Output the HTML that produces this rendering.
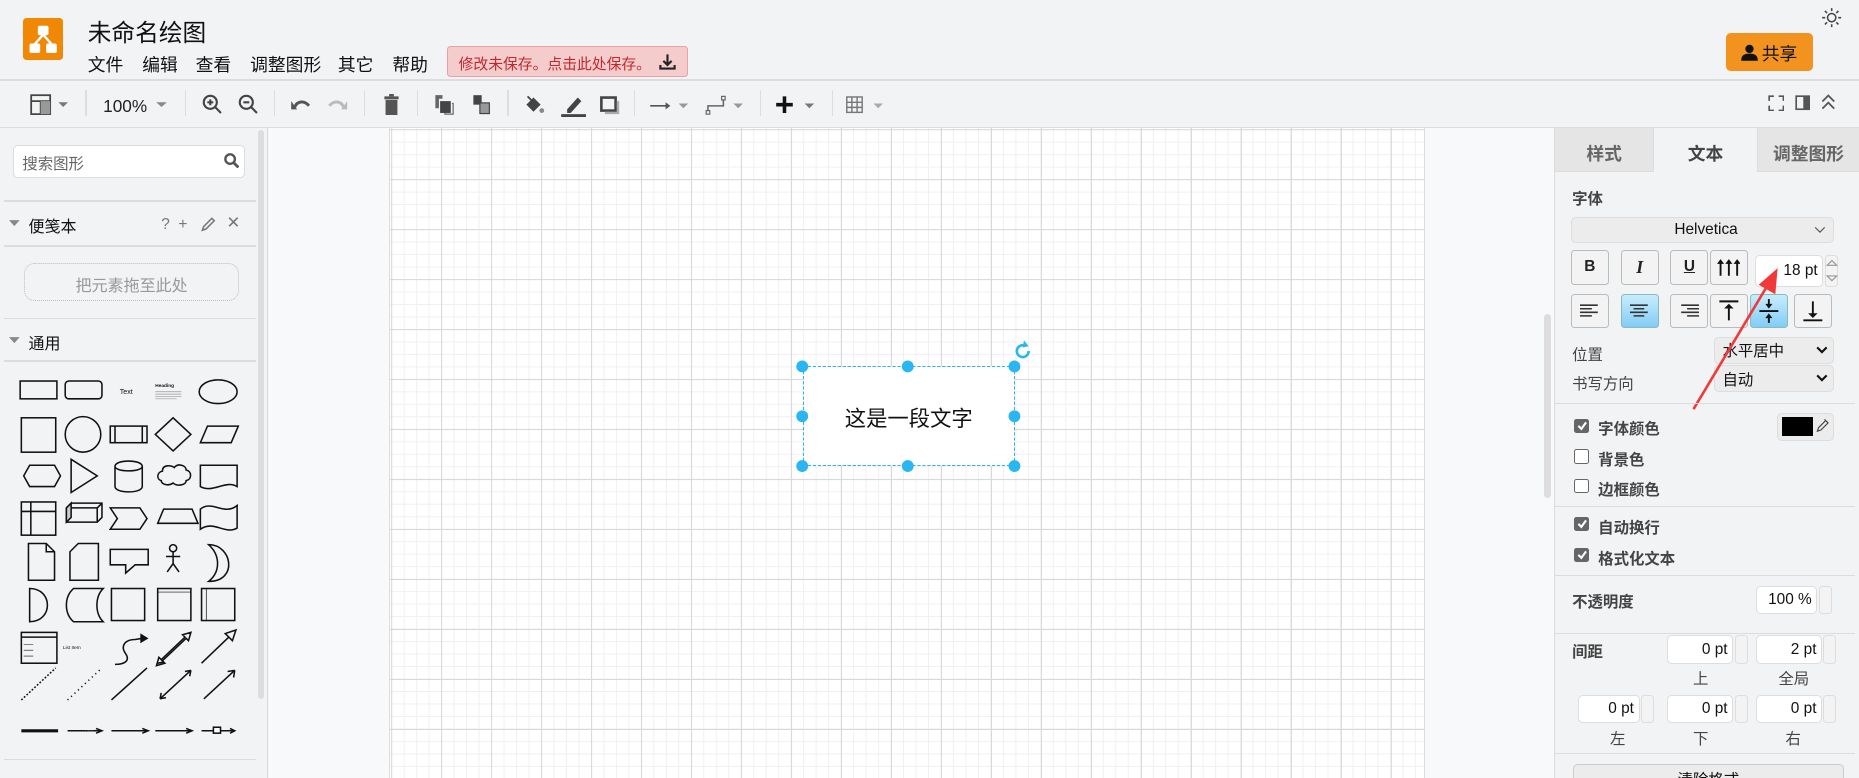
<!DOCTYPE html>
<html><head><meta charset="utf-8">
<style>
*{box-sizing:border-box;margin:0;padding:0}
html,body{width:1859px;height:778px;overflow:hidden;background:#f1f3f4}
#w{zoom:1.18559;width:1568px;height:656px;position:relative;overflow:hidden;font-family:"Liberation Sans","Noto Sans CJK SC",sans-serif;color:#222;background:#f1f3f4}
.a{position:absolute}
.t{font-size:13px;color:#444;white-space:nowrap}
.b{font-weight:bold}
.btn{position:absolute;border:1px solid #bbb;border-radius:3px;background:#f3f3f3;display:flex;align-items:center;justify-content:center}
.inp{position:absolute;background:#fff;border:1px solid #ddd;border-radius:4px;font-size:13px;text-align:right;padding-right:4px;display:flex;align-items:center;justify-content:flex-end;color:#111}
.spin{position:absolute;width:11px;border:1px solid #ddd;border-radius:3px;background:#f3f3f3}
.sel{position:absolute;border:1px solid #ddd;border-radius:4px;background:#ececec;font-size:13px;display:flex;align-items:center;padding-left:6px;color:#111}
.hr{position:absolute;height:1px;background:#dadce0}
.cb{position:absolute;width:12px;height:12px;border:1px solid #666;border-radius:2px;background:#fff}
.cb.on{background:#666}
.tb{position:absolute;top:79px}
.sep{position:absolute;top:76px;width:1px;height:22px;background:#ddd}
.m{position:absolute;top:43px;font-size:15px;color:#111;white-space:nowrap}
</style></head><body><div id="w">
<!-- header -->
<div class="a" style="left:19px;top:15px;width:34px;height:36px;background:#f08705;border-radius:3px"></div>
<svg class="a" style="left:19px;top:15px" width="34" height="36"><g fill="#fff" stroke="#fff"><rect x="13" y="7" width="8" height="7" rx="1"/><rect x="6" y="22" width="8" height="7" rx="1"/><rect x="20" y="22" width="8" height="7" rx="1"/><path d="M17 14L10 22M17 14L24 22" stroke-width="2" fill="none"/></g></svg>
<div class="a" style="left:74px;top:11px;font-size:20px;color:#111">未命名绘图</div>
<div class="m" style="left:74px">文件</div><div class="m" style="left:120px">编辑</div><div class="m" style="left:165px">查看</div><div class="m" style="left:211px">调整图形</div><div class="m" style="left:285px">其它</div><div class="m" style="left:331px">帮助</div>
<div class="a" style="left:377px;top:39px;width:203px;height:26px;background:#f4cccc;border:1px solid #e6a2a8;border-radius:3px;font-size:12.5px;color:#c0282d;padding:5px 0 0 9px">修改未保存。点击此处保存。</div>
<svg class="a" style="left:555px;top:44px" width="16" height="16"><path d="M8 2v9M4.5 7.5L8 11l3.5-3.5M2 11v3h12v-3" stroke="#222" stroke-width="1.8" fill="none"/></svg>
<div class="a" style="left:1456px;top:28px;width:73px;height:32px;background:#f2931f;border-radius:4px;font-size:15px;color:#111;padding:6px 0 0 30px">共享</div>
<svg class="a" style="left:1468px;top:36px" width="16" height="16"><circle cx="8" cy="5" r="3.5" fill="#111"/><path d="M1 15c0-5 3-6 7-6s7 1 7 6z" fill="#111"/></svg>
<svg class="a" style="left:1536px;top:6px" width="18" height="18"><circle cx="9" cy="9" r="3.5" stroke="#444" stroke-width="1.3" fill="none"/><g stroke="#444" stroke-width="1.3"><path d="M9 1v2.5M9 14.5V17M1 9h2.5M14.5 9H17M3.3 3.3l1.8 1.8M12.9 12.9l1.8 1.8M3.3 14.7l1.8-1.8M12.9 5.1l1.8-1.8"/></g></svg>
<div class="hr" style="left:0;top:67px;width:1568px;background:#dcdcdc"></div>
<!-- toolbar -->
<svg class="tb" style="left:25px" width="36" height="18"><rect x="1" y="1" width="16" height="16" fill="none" stroke="#444" stroke-width="1.5"/><path d="M1 6h16M9 6v11" stroke="#444" stroke-width="1.5"/><rect x="9" y="6" width="8" height="11" fill="#999"/><path d="M24 7h8l-4 4z" fill="#777"/></svg>
<div class="sep" style="left:72px"></div>
<div class="a" style="left:87px;top:81px;font-size:14.5px;color:#222">100%</div>
<svg class="tb" style="left:131px" width="12" height="18"><path d="M1 7h9l-4.5 4z" fill="#888"/></svg>
<div class="sep" style="left:156px"></div>
<svg class="tb" style="left:170px" width="18" height="18"><circle cx="7" cy="7" r="5.5" stroke="#444" stroke-width="1.8" fill="none"/><path d="M11 11l5 5M4.5 7h5M7 4.5v5" stroke="#444" stroke-width="1.8"/></svg>
<svg class="tb" style="left:201px" width="18" height="18"><circle cx="7" cy="7" r="5.5" stroke="#444" stroke-width="1.8" fill="none"/><path d="M11 11l5 5M4.5 7h5" stroke="#444" stroke-width="1.8"/></svg>
<div class="sep" style="left:231px"></div>
<svg class="tb" style="left:245px" width="18" height="18"><path d="M4 11c2-5 8-6 12-1" stroke="#555" stroke-width="2.5" fill="none"/><path d="M1 6l5 7H1z" fill="#555"/></svg>
<svg class="tb" style="left:276px" width="18" height="18"><path d="M14 11c-2-5-8-6-12-1" stroke="#bbb" stroke-width="2.5" fill="none"/><path d="M17 6l-5 7h5z" fill="#bbb"/></svg>
<div class="sep" style="left:307px"></div>
<svg class="tb" style="left:322px" width="16" height="18"><rect x="2" y="2" width="12" height="2.5" fill="#555"/><rect x="6" y="0" width="4" height="2" fill="#555"/><rect x="3" y="5" width="10" height="13" fill="#555"/></svg>
<div class="sep" style="left:352px"></div>
<svg class="tb" style="left:365px" width="18" height="18"><path d="M2 1h6v3H5v8H2z" fill="#666"/><rect x="6" y="6" width="9" height="10" fill="#444"/><path d="M10 16v1h7V8h-1" stroke="#666" fill="none"/></svg>
<svg class="tb" style="left:397px" width="18" height="18"><rect x="2" y="1" width="7" height="8" fill="#444"/><rect x="7" y="7" width="9" height="10" fill="#444"/><rect x="8" y="8" width="7" height="8" fill="#999"/></svg>
<div class="sep" style="left:428px"></div>
<svg class="tb" style="left:442px" width="18" height="18"><path d="M2 9l6-6 6 6-6 6z" fill="#444"/><path d="M3 2l5 5" stroke="#444" stroke-width="1.5"/><circle cx="15" cy="14" r="2" fill="#888"/></svg>
<svg class="tb" style="left:472px" width="22" height="20"><path d="M6 13l9-10 3 3-9 10H6z" fill="#444"/><rect x="1" y="17" width="21" height="3" fill="#444"/></svg>
<svg class="tb" style="left:505px" width="18" height="18"><rect x="2" y="3" width="12" height="11" fill="none" stroke="#444" stroke-width="2.2"/><path d="M5 16h11V6" stroke="#aaa" stroke-width="2" fill="none"/></svg>
<div class="sep" style="left:535px"></div>
<svg class="tb" style="left:547px" width="36" height="18"><path d="M1 10h14" stroke="#555" stroke-width="1.4"/><path d="M14 7l4 3-4 3z" fill="#555"/><path d="M25 8h8l-4 4z" fill="#999"/></svg>
<svg class="tb" style="left:595px" width="36" height="20"><rect x="1" y="14" width="3" height="3" fill="none" stroke="#666"/><rect x="14" y="2" width="3" height="3" fill="none" stroke="#666"/><path d="M2.5 14V10h13V5" stroke="#666" stroke-width="1.3" fill="none"/><path d="M24 8h8l-4 4z" fill="#999"/></svg>
<div class="sep" style="left:641px"></div>
<svg class="tb" style="left:654px" width="36" height="18"><path d="M8 2v14M1 9h14" stroke="#111" stroke-width="3"/><path d="M25 8h8l-4 4z" fill="#777"/></svg>
<div class="sep" style="left:702px"></div>
<svg class="tb" style="left:713px" width="36" height="18"><g stroke="#777" stroke-width="1.2" fill="none"><rect x="1.5" y="2.5" width="13" height="13"/><path d="M1.5 7h13M1.5 11.3h13M5.8 2.5v13M10.2 2.5v13"/></g><path d="M24 8h8l-4 4z" fill="#aaa"/></svg>
<svg class="tb" style="left:1491px;top:80px" width="14" height="14"><path d="M1 5V1h4M9 1h4v4M13 9v4H9M5 13H1V9" stroke="#555" stroke-width="1.4" fill="none"/></svg>
<svg class="tb" style="left:1514px;top:80px" width="13" height="14"><rect x="1" y="1" width="11" height="11" stroke="#555" stroke-width="1.4" fill="none"/><rect x="7" y="1" width="5" height="11" fill="#555"/></svg>
<svg class="tb" style="left:1535px;top:78px" width="14" height="16"><path d="M2 8l5-5 5 5M2 14l5-5 5 5" stroke="#555" stroke-width="1.5" fill="none"/></svg>
<div class="hr" style="left:0;top:107px;width:1568px;background:#dcdcdc"></div>
<!-- left sidebar -->
<div class="a" style="left:0;top:108px;width:226px;height:548px;background:#f1f3f4;border-right:1px solid #dcdcdc"></div>
<div class="a" style="left:218px;top:110px;width:5px;height:480px;background:#ddd;border-radius:3px"></div>
<div class="a" style="left:11px;top:122px;width:196px;height:28px;background:#fff;border:1px solid #ddd;border-radius:4px;font-size:13px;color:#666;padding:5px 0 0 7px">搜索图形</div>
<svg class="a" style="left:188px;top:128px" width="14" height="14"><circle cx="6" cy="6" r="4" stroke="#555" stroke-width="2" fill="none"/><path d="M9 9l4 4" stroke="#555" stroke-width="2.4"/></svg>
<div class="hr" style="left:3px;top:169px;width:213px"></div>
<svg class="a" style="left:8px;top:185px" width="10" height="8"><path d="M0 1h9L4.5 6z" fill="#888"/></svg>
<div class="a" style="left:24px;top:180px;font-size:13.5px;color:#111">便笺本</div>
<div class="a t" style="left:136px;top:182px;color:#777">?&nbsp;&nbsp;+</div>
<svg class="a" style="left:169px;top:182px" width="14" height="14"><path d="M2 12l1-3 7-7 2 2-7 7z" stroke="#777" stroke-width="1.3" fill="none"/></svg>
<div class="a" style="left:191px;top:180px;font-size:14px;color:#777">✕</div>
<div class="hr" style="left:3px;top:207px;width:213px"></div>
<div class="a" style="left:20px;top:222px;width:182px;height:32px;border:1.5px dotted #bbb;border-radius:9px;font-size:13.5px;color:#999;text-align:center;padding-top:7px">把元素拖至此处</div>
<div class="hr" style="left:3px;top:268px;width:213px"></div>
<svg class="a" style="left:8px;top:283px" width="10" height="8"><path d="M0 1h9L4.5 6z" fill="#888"/></svg>
<div class="a" style="left:24px;top:278px;font-size:13.5px;color:#111">通用</div>
<div class="hr" style="left:3px;top:304px;width:213px"></div>
<svg class="a" style="left:0;top:310px" width="216" height="320" fill="none" stroke="#111" stroke-width="1.3">
<g transform="translate(0,-310)">
<rect x="17" y="321" width="31" height="15"/><rect x="55" y="321" width="31" height="15" rx="3"/>
<text x="101" y="332" font-size="6" fill="#111" stroke="none" font-family="Liberation Sans">Text</text>
<text x="131" y="326" font-size="4" fill="#111" stroke="none" font-weight="bold" font-family="Liberation Sans">Heading</text>
<path d="M131 330h22M131 332h22M131 334h22M131 336h18" stroke="#999" stroke-width=".6"/>
<ellipse cx="184" cy="330" rx="16" ry="10"/>
<rect x="18" y="352" width="29" height="29"/><circle cx="70" cy="366" r="15"/>
<rect x="93" y="359" width="31" height="14"/><path d="M97 359v14M120 359v14"/>
<path d="M146 352l15 14-15 14-15-14z"/><path d="M175 359h26l-6 14h-26z"/>
<path d="M20 401l5-9h21l5 9-5 9H25z"/><path d="M60 387l22 14-22 14z"/>
<path d="M97 393c0-6 23-6 23 0v17c0 6-23 6-23 0z M97 393c0 5 23 5 23 0"/>
<path d="M137 397c0-6 8-5 10-3 3-4 10-2 10 2 5 1 5 8 0 9 0 4-8 5-11 2-4 3-10 1-10-2-4-1-4-7 1-8z"/>
<path d="M169 392h31v18c-10-6-20 6-31 0z"/>
<rect x="18" y="423" width="29" height="28"/><path d="M18 431h29M26 423v28"/>
<path d="M56 428l4-4h26v12l-4 4H56z M56 428h26v12M82 428l4-4"/><path d="M56 428l4-4v12l-4 4z" fill="#ccc"/>
<path d="M93 428h25l6 9-6 9H93l6-9z"/><path d="M138 429h24l5 12h-34z"/>
<path d="M169 429c10-8 20 6 31-3v19c-10 6-20-7-31 1z"/>
<path d="M24 458h15l7 7v24H24z M39 458v7h7"/><path d="M66 458h17v31H59V465z"/>
<path d="M93 463h32v13h-11l-8 7v-7H93z"/><circle cx="146" cy="462" r="3"/><path d="M146 465v10M140 469h12M146 475l-5 7M146 475l5 7"/>
<path d="M176 459c20 0 25 31 0 31 10-8 10-22 0-31z"/>
<path d="M25 496c20 0 20 28 0 28z"/><path d="M62 496h25c-7 7-7 21 0 28H62c-8-7-8-21 0-28z"/>
<rect x="94" y="496" width="28" height="27"/><rect x="133" y="496" width="28" height="27"/><path d="M133 499h28" stroke-width=".6"/>
<rect x="170" y="496" width="28" height="27"/><path d="M174 496v27" stroke-width=".6"/>
<rect x="18" y="533" width="30" height="26"/><path d="M18 537h30"/>
<path d="M20 543h8M20 548h8M20 553h8" stroke-width=".5"/>
<text x="53" y="547" font-size="4" fill="#111" stroke="none" font-family="Liberation Sans">List Item</text>
<path d="M97 560c8 0 13-3 9-9-5-7 0-12 8-12l6-1"/><path d="M119 535l5 3-5 3z" fill="#111"/>
<path d="M133 559l5-1-2-2 20-19-2-2 7-2-2 7-2-2-20 19 2 2-7 2 2-7 2 2"/>
<path d="M170 559l23-22-3-3 9-3-3 9-3-3-23 22z"/>
<path d="M18 590l29-27" stroke-dasharray="1.5,1.5"/><path d="M57 590l29-27" stroke-dasharray="1,3"/>
<path d="M94 590l30-27"/><path d="M135 589l26-24"/><path d="M135 589l5-1M135 589l1-5M161 565l-5 1M161 565l-1 5"/>
<path d="M172 589l26-24"/><path d="M198 565l-6 1M198 565l-1 6"/>
<path d="M18 616h31" stroke-width="2.6"/>
<path d="M57 616h28M81 614l5 2-5 2M94 616h30M120 614l5 2-5 2M131 616h30M157 614l5 2-5 2M170 616h28M194 614l4 2-4 2"/>
<rect x="180" y="613" width="6" height="5" fill="#fff"/>
<text x="72" y="617" font-size="2.5" fill="#888" stroke="none">Label</text>
</g></svg>
<div class="hr" style="left:3px;top:640px;width:213px"></div>
<!-- canvas -->
<div class="a" style="left:227px;top:108px;width:1084px;height:548px;background:#f8f9fa"></div>
<div class="a" style="left:328px;top:108px;width:874px;height:548px;background-color:#fff;border-left:1px solid #ddd;border-right:1px solid #ddd;
background-image:linear-gradient(#d8d8d8 1px,transparent 1px),linear-gradient(90deg,#d8d8d8 1px,transparent 1px),linear-gradient(#f0f0f0 1px,transparent 1px),linear-gradient(90deg,#f0f0f0 1px,transparent 1px);
background-size:42.17px 42.17px,42.17px 42.17px,10.54px 10.54px,10.54px 10.54px;background-position:1px 1px,1px 1px,1px 1px,1px 1px"></div>
<div class="a" style="left:1302px;top:265px;width:6px;height:155px;background:#ddd;border-radius:3px"></div>
<div class="a" style="left:677px;top:309px;width:179px;height:84px;background:#fff;border:1px dashed #111;outline:1px dashed #29b6f2;outline-offset:-1px"></div>
<div class="a" style="left:677px;top:339px;width:179px;text-align:center;font-size:18px;color:#111">这是一段文字</div>
<svg class="a" style="left:665px;top:285px" width="205" height="120"><g fill="#29b6f2"><circle cx="12" cy="24" r="5"/><circle cx="101" cy="24" r="5"/><circle cx="191" cy="24" r="5"/><circle cx="12" cy="66" r="5"/><circle cx="191" cy="66" r="5"/><circle cx="12" cy="108" r="5"/><circle cx="101" cy="108" r="5"/><circle cx="191" cy="108" r="5"/></g>
<path d="M208 11a5 5 0 1 1-3-4.5" stroke="#29b6f2" stroke-width="2.2" fill="none" transform="translate(-5,0)"/><path d="M199 2l4 5-5 1z" fill="#29b6f2"/></svg>
<!-- right panel -->
<div class="a" style="left:1311px;top:108px;width:257px;height:548px;background:#f1f3f4;border-left:1px solid #dcdcdc"></div>
<div class="a" style="left:1312px;top:108px;width:83px;height:37px;background:#e5e5e5;border-bottom:1px solid #dcdcdc;border-right:1px solid #dcdcdc;font-size:15px;font-weight:bold;color:#666;text-align:center;padding-top:10px">样式</div>
<div class="a" style="left:1395px;top:108px;width:87px;height:37px;font-size:15px;font-weight:bold;color:#444;text-align:center;padding-top:10px">文本</div>
<div class="a" style="left:1482px;top:108px;width:86px;height:37px;background:#e5e5e5;border-bottom:1px solid #dcdcdc;border-left:1px solid #dcdcdc;font-size:15px;font-weight:bold;color:#666;text-align:center;padding-top:10px;white-space:nowrap">调整图形</div>
<div class="a t b" style="left:1326px;top:158px">字体</div>
<div class="sel" style="left:1325px;top:183px;width:222px;height:22px;justify-content:center">Helvetica</div>
<svg class="a" style="left:1530px;top:190px" width="10" height="8"><path d="M1 2l4 4 4-4" stroke="#555" fill="none"/></svg>
<div class="btn" style="left:1325px;top:211px;width:32px;height:29px;font-weight:900;font-size:13px">B</div>
<div class="btn" style="left:1367px;top:211px;width:32px;height:29px;font-style:italic;font-weight:bold;font-family:'Liberation Serif',serif;font-size:15px">I</div>
<div class="btn" style="left:1409px;top:211px;width:32px;height:29px;font-weight:bold;text-decoration:underline;font-size:13px">U</div>
<div class="btn" style="left:1442px;top:211px;width:32px;height:29px"><svg width="20" height="16"><g stroke="#111" stroke-width="1.6"><path d="M3 3v12M10 3v12M17 3v12"/></g><g fill="#111"><path d="M0 5l3-4 3 4zM7 5l3-4 3 4zM14 5l3-4 3 4z"/></g></svg></div>
<div class="inp" style="left:1480px;top:215px;width:58px;height:27px">18 pt</div>
<div class="spin" style="left:1539px;top:215px;height:27px"></div>
<svg class="a" style="left:1540px;top:217px" width="10" height="24"><path d="M1 7l4-4 4 4zM1 16l4 4 4-4z" fill="none" stroke="#999"/></svg>
<div class="btn" style="left:1325px;top:248px;width:32px;height:29px"><svg width="16" height="12"><path d="M0 1h15M0 4h10M0 7h15M0 10h10" stroke="#333" stroke-width="1.3"/></svg></div>
<div class="btn" style="left:1367px;top:248px;width:32px;height:29px;background:linear-gradient(#c8ecfd,#82cdf6);border-color:#8bb"><svg width="16" height="12"><path d="M0 1h15M3 4h9M0 7h15M3 10h9" stroke="#333" stroke-width="1.3"/></svg></div>
<div class="btn" style="left:1409px;top:248px;width:32px;height:29px"><svg width="16" height="12"><path d="M1 1h15M6 4h10M1 7h15M6 10h10" stroke="#333" stroke-width="1.3"/></svg></div>
<div class="btn" style="left:1442px;top:248px;width:32px;height:29px"><svg width="20" height="20"><path d="M2 2h16M10 6v12" stroke="#111" stroke-width="1.6"/><path d="M6 8l4-4 4 4z" fill="#111"/></svg></div>
<div class="btn" style="left:1476px;top:248px;width:32px;height:29px;background:linear-gradient(#c8ecfd,#82cdf6);border-color:#8bb"><svg width="20" height="22"><path d="M2 11h16M10 1v6M10 15v6" stroke="#111" stroke-width="1.6"/><path d="M7 5l3 4 3-4zM7 17l3-4 3 4z" fill="#111"/></svg></div>
<div class="btn" style="left:1513px;top:248px;width:32px;height:29px"><svg width="20" height="20"><path d="M2 18h16M10 2v12" stroke="#111" stroke-width="1.6"/><path d="M6 12l4 4 4-4z" fill="#111"/></svg></div>
<div class="a t" style="left:1326px;top:289px">位置</div>
<div class="sel" style="left:1446px;top:284px;width:101px;height:23px">水平居中</div>
<svg class="a" style="left:1532px;top:291px" width="10" height="8"><path d="M1 2l4 4 4-4" stroke="#111" stroke-width="1.8" fill="none"/></svg>
<div class="a t" style="left:1326px;top:314px">书写方向</div>
<div class="sel" style="left:1446px;top:308px;width:101px;height:23px">自动</div>
<svg class="a" style="left:1532px;top:315px" width="10" height="8"><path d="M1 2l4 4 4-4" stroke="#111" stroke-width="1.8" fill="none"/></svg>
<svg class="a" style="left:1420px;top:220px" width="90" height="130"><path d="M8 125L72 18" stroke="#f03a3a" stroke-width="2.2"/><path d="M79 6l-2 22-14-8z" fill="#f03a3a"/></svg>
<div class="hr" style="left:1312px;top:340px;width:253px"></div>
<div class="cb on" style="left:1328px;top:353px"></div><svg class="a" style="left:1329px;top:354px" width="10" height="10"><path d="M2 5l2.5 2.5L8.5 2" stroke="#fff" stroke-width="1.8" fill="none"/></svg>
<div class="a t b" style="left:1348px;top:352px">字体颜色</div>
<div class="a" style="left:1499px;top:348px;width:48px;height:24px;border:1px solid #ddd;border-radius:4px;background:#ececec"></div>
<div class="a" style="left:1503px;top:352px;width:26px;height:16px;background:#000"></div>
<svg class="a" style="left:1531px;top:352px" width="12" height="14"><path d="M2 12l1-3 6-6 2 2-6 6zM8 2l3 3" stroke="#444" fill="none"/></svg>
<div class="cb" style="left:1328px;top:379px"></div><div class="a t b" style="left:1348px;top:378px">背景色</div>
<div class="cb" style="left:1328px;top:404px"></div><div class="a t b" style="left:1348px;top:403px">边框颜色</div>
<div class="hr" style="left:1312px;top:427px;width:253px"></div>
<div class="cb on" style="left:1328px;top:436px"></div><svg class="a" style="left:1329px;top:437px" width="10" height="10"><path d="M2 5l2.5 2.5L8.5 2" stroke="#fff" stroke-width="1.8" fill="none"/></svg>
<div class="a t b" style="left:1348px;top:435px">自动换行</div>
<div class="cb on" style="left:1328px;top:462px"></div><svg class="a" style="left:1329px;top:463px" width="10" height="10"><path d="M2 5l2.5 2.5L8.5 2" stroke="#fff" stroke-width="1.8" fill="none"/></svg>
<div class="a t b" style="left:1348px;top:461px">格式化文本</div>
<div class="hr" style="left:1312px;top:485px;width:253px"></div>
<div class="a t b" style="left:1326px;top:498px">不透明度</div>
<div class="inp" style="left:1481px;top:494px;width:52px;height:24px">100 %</div>
<div class="spin" style="left:1534px;top:494px;height:24px"></div>
<div class="hr" style="left:1312px;top:534px;width:253px"></div>
<div class="a t b" style="left:1326px;top:540px">间距</div>
<div class="inp" style="left:1406px;top:536px;width:56px;height:24px">0 pt</div><div class="spin" style="left:1463px;top:536px;height:24px"></div>
<div class="inp" style="left:1481px;top:536px;width:56px;height:24px">2 pt</div><div class="spin" style="left:1538px;top:536px;height:24px"></div>
<div class="a t" style="left:1428px;top:563px">上</div><div class="a t" style="left:1500px;top:563px">全局</div>
<div class="inp" style="left:1331px;top:586px;width:52px;height:24px">0 pt</div><div class="spin" style="left:1384px;top:586px;height:24px"></div>
<div class="inp" style="left:1406px;top:586px;width:56px;height:24px">0 pt</div><div class="spin" style="left:1463px;top:586px;height:24px"></div>
<div class="inp" style="left:1481px;top:586px;width:56px;height:24px">0 pt</div><div class="spin" style="left:1538px;top:586px;height:24px"></div>
<div class="a t" style="left:1358px;top:613px">左</div><div class="a t" style="left:1428px;top:613px">下</div><div class="a t" style="left:1506px;top:613px">右</div>
<div class="hr" style="left:1312px;top:635px;width:253px"></div>
<div class="a" style="left:1327px;top:644px;width:228px;height:24px;border:1px solid #ccc;border-radius:4px;background:#ececec;font-size:13px;text-align:center;padding-top:3px;color:#111">清除格式</div>
</div></body></html>
